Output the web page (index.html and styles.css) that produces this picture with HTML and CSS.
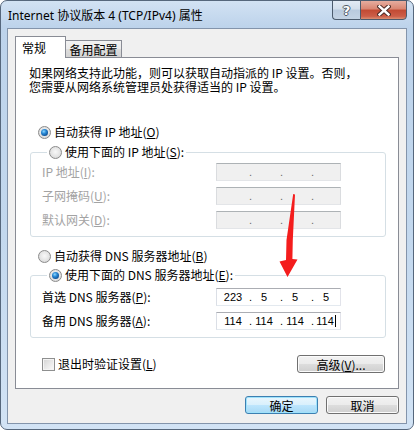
FILE: index.html
```html
<!DOCTYPE html>
<html lang="zh-CN">
<head>
    <meta charset="UTF-8">
    <meta name="viewport" content="width=device-width, initial-scale=1.0">
    <title>Internet 协议版本 4 (TCP/IPv4) 属性</title>
    <link rel="stylesheet" href="styles.css">
</head>
<body>

    <div class="window">
        <div class="titlebar">
            <div class="title">Internet 协议版本 4 (TCP/IPv4) 属性</div>
            <div class="caption-btns">
                <div class="cap-btn help">?</div>
                <div class="cap-btn close">
                    <svg width="14" height="11" viewBox="0 0 14 11">
                        <path d="M2.5 1.5 L11.5 9.5 M11.5 1.5 L2.5 9.5" stroke="#4b2a25" stroke-width="4.4" stroke-linecap="square" fill="none"/>
                        <path d="M2.5 1.5 L11.5 9.5 M11.5 1.5 L2.5 9.5" stroke="#ffffff" stroke-width="2.4" stroke-linecap="square" fill="none"/>
                    </svg>
                </div>
            </div>
        </div>

        <div class="client">
            <div class="tabs">
                <div class="tab active">常规</div>
                <div class="tab">备用配置</div>
            </div>

            <div class="panel">
                <p class="desc">如果网络支持此功能，则可以获取自动指派的 IP 设置。否则，</p>
                <p class="desc">您需要从网络系统管理员处获得适当的 IP 设置。</p>

                <div class="radio-row first">
                    <span class="radio on"></span>
                    <span>自动获得 IP 地址(<u>O</u>)</span>
                </div>

                <fieldset class="group ip-group">
                    <legend>
                        <span class="radio"></span>
                        <span>使用下面的 IP 地址(<u>S</u>):</span>
                    </legend>
                    <div class="rows">
                        <span class="label disabled">IP 地址(<u>I</u>):</span>
                        <div class="ip off"><span class="oct"></span><span class="dot">.</span><span class="oct"></span><span class="dot">.</span><span class="oct"></span><span class="dot">.</span><span class="oct"></span></div>
                        <span class="label disabled">子网掩码(<u>U</u>):</span>
                        <div class="ip off"><span class="oct"></span><span class="dot">.</span><span class="oct"></span><span class="dot">.</span><span class="oct"></span><span class="dot">.</span><span class="oct"></span></div>
                        <span class="label disabled">默认网关(<u>D</u>):</span>
                        <div class="ip off"><span class="oct"></span><span class="dot">.</span><span class="oct"></span><span class="dot">.</span><span class="oct"></span><span class="dot">.</span><span class="oct"></span></div>
                    </div>
                </fieldset>

                <div class="radio-row dns">
                    <span class="radio"></span>
                    <span>自动获得 DNS 服务器地址(<u>B</u>)</span>
                </div>

                <fieldset class="group dns-group">
                    <legend>
                        <span class="radio on"></span>
                        <span>使用下面的 DNS 服务器地址(<u>E</u>):</span>
                    </legend>
                    <div class="rows">
                        <span class="label">首选 DNS 服务器(<u>P</u>):</span>
                        <div class="ip"><span class="oct">223</span><span class="dot">.</span><span class="oct">5</span><span class="dot">.</span><span class="oct">5</span><span class="dot">.</span><span class="oct">5</span></div>
                        <span class="label">备用 DNS 服务器(<u>A</u>):</span>
                        <div class="ip"><span class="oct">114</span><span class="dot">.</span><span class="oct">114</span><span class="dot">.</span><span class="oct">114</span><span class="dot">.</span><span class="oct">114<span class="caret"></span></span></div>
                    </div>
                </fieldset>

                <div class="bottom-row">
                    <span class="check"></span>
                    <span class="check-label">退出时验证设置(<u>L</u>)</span>
                    <button class="btn advanced">高级(<u>V</u>)...</button>
                </div>
            </div>

            <div class="actions">
                <button class="btn default">确定</button>
                <button class="btn">取消</button>
            </div>
        </div>
    </div>

    <!-- red arrow drawn over the screenshot -->
    <svg class="arrow" width="414" height="430" viewBox="0 0 414 430">
        <polygon points="293.2,194 295,194.5 292.8,240 292.4,259 297.5,259.5 287.5,277 279.5,261.5 286,260 286.5,240" fill="#f41d1d"/>
    </svg>

</body>
</html>
```

FILE: styles.css
```css
* {
    margin: 0;
    padding: 0;
    box-sizing: border-box;
}
body {
    font-family: "Noto Sans CJK SC", sans-serif;
    font-size: 12px;
    color: #000;
    background-color: #fff;
}
.window {
    width: 414px;
    height: 430px;
    border: 1px solid #56677c;
    border-radius: 7px;
    background: linear-gradient(to bottom, #d2e2f3 0, #bdd3eb 26px, #c3d8ee 55%, #d2e3f5 100%);
    padding: 0 6px 5px;
    display: flex;
    flex-direction: column;
}
.titlebar {
    height: 27px;
    display: flex;
    align-items: flex-start;
}
.title {
    font-family: "Noto Sans", "Noto Sans CJK SC", sans-serif;
    font-size: 12px;
    line-height: 16px;
    padding: 7px 0 0 1px;
    color: #000;
}
.caption-btns {
    margin-left: auto;
    margin-top: -1px;
    display: flex;
}
.cap-btn {
    height: 20px;
    border: 1px solid #4c5b6d;
    display: flex;
    justify-content: center;
    align-items: center;
}
.cap-btn.help {
    width: 28px;
    border-right: none;
    border-radius: 0 0 0 4px;
    background: linear-gradient(to bottom, #e2ebf5 0%, #d3dfec 45%, #b9cade 50%, #c4d3e4 100%);
    color: #fff;
    font-family: "DejaVu Sans", sans-serif;
    font-weight: bold;
    font-size: 13px;
    text-shadow: 1px 0 0 #4d5866, -1px 0 0 #4d5866, 0 1px 0 #4d5866, 0 -1px 0 #4d5866;
}
.cap-btn.close {
    width: 47px;
    border-radius: 0 0 4px 0;
    background: linear-gradient(to bottom, #e6ad9f 0%, #d98571 45%, #c24a33 50%, #cc5e48 85%, #dc8f72 100%);
}
.client {
    flex: 1;
    border: 1px solid #8394ab;
    background-color: #f0f0f0;
    padding: 7px 7px 0 7px;
    display: flex;
    flex-direction: column;
}
.tabs {
    display: flex;
    align-items: flex-end;
    height: 22px;
    margin-bottom: -1px;
    position: relative;
    z-index: 1;
}
.tab {
    width: 57px;
    height: 17px;
    margin-bottom: 1px;
    margin-left: -1px;
    border: 1px solid #898c95;
    border-bottom: none;
    background: linear-gradient(to bottom, #f2f2f2 0%, #ebebeb 50%, #dddddd 51%, #d3d3d3 100%);
    text-align: center;
    line-height: 15px;
    padding-top: 1px;
}
.tab.active {
    width: 51px;
    height: 22px;
    margin: 0;
    background: #fff;
    text-align: left;
    line-height: 16px;
    padding: 3px 0 0 6px;
    position: relative;
    z-index: 2;
}
.panel {
    border: 1px solid #898c95;
    background-color: #fff;
    padding-bottom: 15px;
}
.desc {
    margin-left: 13px;
    height: 14px;
    line-height: 14px;
    overflow: visible;
}
.desc:first-child {
    margin-top: 8px;
}
.radio-row {
    display: flex;
    align-items: center;
    height: 16px;
    margin-left: 22px;
    gap: 3px;
    line-height: 16px;
}
.radio-row.first {
    margin-top: 30px;
}
.radio-row.dns {
    margin-top: 11px;
}
.radio {
    width: 13px;
    height: 13px;
    border-radius: 50%;
    border: 1px solid #8b8b8b;
    background: radial-gradient(circle at 50% 45%, #f8f8f8 0, #e4e4e4 55%, #cfcfcf 100%);
    position: relative;
    flex-shrink: 0;
}
.radio.on::after {
    content: "";
    position: absolute;
    left: 2px;
    top: 2px;
    width: 7px;
    height: 7px;
    border-radius: 50%;
    background: radial-gradient(circle at 40% 35%, #8ed8ff 0, #2a8ad6 35%, #0d4f95 75%, #0a3a73 100%);
}
.group {
    border: 1px solid #d5dfe5;
    border-radius: 3px;
    margin: 4px 12px 0 14px;
    padding: 3px 0 7px 11px;
}
.group legend {
    display: flex;
    align-items: center;
    gap: 3px;
    height: 16px;
    line-height: 16px;
    margin-left: 5px;
    padding: 0 2px;
}
.dns-group {
    margin-top: 3px;
    padding-top: 5px;
}
.rows {
    display: grid;
    grid-template-columns: 174px 125px;
    grid-auto-rows: 18px;
    row-gap: 6px;
    align-items: center;
}
.label {
    line-height: 16px;
}
.disabled {
    color: #a3a3a3;
}
.ip {
    height: 18px;
    border: 1px solid;
    border-color: #abadb3 #e2e3ea #e3e9ef #dbdfe6;
    background-color: #fff;
    padding-left: 4px;
    display: flex;
    align-items: center;
    font-family: "Liberation Sans", sans-serif;
    font-size: 11px;
    line-height: 16px;
}
.ip.off {
    background-color: #f0f0f0;
    border-color: #adb2b5 #dadcdf #e3e5e8 #dadcdf;
    color: #6d6d6d;
}
.oct {
    width: 24px;
    text-align: center;
    height: 16px;
}
.dot {
    width: 7px;
    text-align: right;
}
.caret {
    display: inline-block;
    width: 1px;
    height: 12px;
    margin-left: 1px;
    background-color: #000;
    vertical-align: -2px;
}
.bottom-row {
    display: flex;
    align-items: center;
    height: 18px;
    margin: 17px 13px 0 26px;
}
.check {
    width: 13px;
    height: 13px;
    border: 1px solid #8e8f8f;
    background: linear-gradient(135deg, #d3d3d3 0%, #e8e8e8 50%, #fbfbfb 100%);
    box-shadow: inset 0 0 0 1px #f4f4f4;
}
.check-label {
    margin-left: 3px;
    line-height: 16px;
}
.btn {
    height: 18px;
    border: 1px solid #707070;
    border-radius: 3px;
    background: linear-gradient(to bottom, #f2f2f2 0%, #ebebeb 49%, #dddddd 50%, #cfcfcf 100%);
    box-shadow: inset 0 0 0 1px #fbfbfb;
    font-family: "Noto Sans CJK SC", sans-serif;
    font-size: 12px;
    line-height: 15px;
    color: #000;
    width: 73px;
}
.btn.advanced {
    margin-left: auto;
    width: 88px;
}
.btn.default {
    border-color: #3c7fb1;
    background: linear-gradient(to bottom, #eaf6fd 0%, #d9f0fc 49%, #bee6fd 50%, #a7d9f5 100%);
    box-shadow: inset 0 0 0 1px #9fe2fb;
}
.actions {
    display: flex;
    justify-content: flex-end;
    gap: 8px;
    margin-top: 7px;
}
.arrow {
    position: absolute;
    left: 0;
    top: 0;
    pointer-events: none;
}
```
